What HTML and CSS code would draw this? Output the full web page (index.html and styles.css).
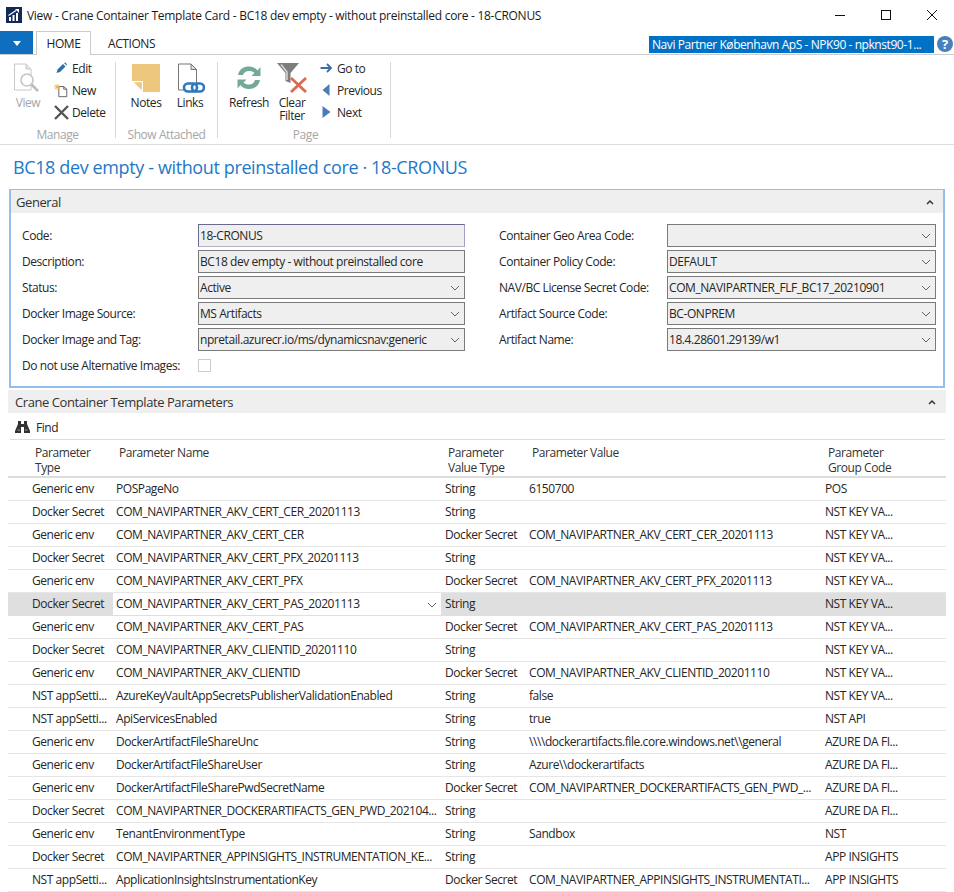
FILE: index.html
```html
<!DOCTYPE html>
<html lang="en">
<head>
    <meta charset="UTF-8">
    <title>View - Crane Container Template Card</title>
    <link rel="stylesheet" href="styles.css">
</head>
<body>
    <header class="titlebar">
        <svg class="app-icon" width="16" height="16" viewBox="0 0 16 16">
            <rect width="16" height="16" fill="#12295a"/>
            <path d="M3 14V10H5V14ZM6.5 14V8H8.5V14ZM10 14V6H12V14Z" fill="#fff"/>
            <path d="M2.5 8.5L10 3.5" stroke="#fff" stroke-width="1.2"/>
            <path d="M9 2H13V6Z" fill="#fff"/>
        </svg>
        <span class="window-title">View - Crane Container Template Card - BC18 dev empty - without preinstalled core - 18-CRONUS</span>
        <div class="window-buttons">
            <svg width="12" height="12" viewBox="0 0 12 12"><path d="M1 6.5H11" stroke="#111" fill="none"/></svg>
            <svg width="12" height="12" viewBox="0 0 12 12"><rect x="1.5" y="1.5" width="9" height="9" stroke="#111" fill="none"/></svg>
            <svg width="12" height="12" viewBox="0 0 12 12"><path d="M1 1L11 11M11 1L1 11" stroke="#111" fill="none"/></svg>
        </div>
    </header>

    <nav class="tabbar">
        <button class="menu-button"><span class="menu-arrow"></span></button>
        <span class="tab active">HOME</span>
        <span class="tab">ACTIONS</span>
        <span class="company">Navi Partner København ApS - NPK90 - npknst90-1...</span>
        <span class="help">?</span>
    </nav>

    <section class="ribbon">
        <div class="group group-manage">
            <div class="group-items">
                <div class="big-btn disabled">
                    <svg width="30" height="30" viewBox="0 0 30 30">
                        <path d="M1.5 1H13L18 6V27H1.5Z" fill="#fff" stroke="#c8c8c8"/>
                        <path d="M13 1V6H18" fill="#e4e4e4" stroke="#c8c8c8"/>
                        <circle cx="14" cy="17" r="6" fill="#fff" stroke="#c4c4c4" stroke-width="1.6"/>
                        <path d="M18.5 21.5L25 28" stroke="#bdbdbd" stroke-width="2.6"/>
                    </svg>
                    <span>View</span>
                </div>
                <div class="small-list">
                    <div class="small-btn">
                        <svg width="12" height="12" viewBox="0 0 12 12"><path d="M1 11L2 7.5L7.5 2L10 4.5L4.5 10Z" fill="#2f6fad"/><path d="M8.5 1L9.8 .5L11.5 2.2L11 3.5Z" fill="#2f6fad"/></svg>
                        <span>Edit</span>
                    </div>
                    <div class="small-btn">
                        <svg width="15" height="15" viewBox="0 0 17 15"><path d="M5.5 3H11L14.5 6V14.5H5.5Z" fill="#fff" stroke="#555"/><path d="M11 3V6H14.5" fill="none" stroke="#555"/><path d="M3.5 0V7M0 3.5H7M1 1L6 6M6 1L1 6" stroke="#eeb340"/></svg>
                        <span>New</span>
                    </div>
                    <div class="small-btn">
                        <svg width="15" height="15" viewBox="0 0 15 15"><path d="M1 1L14 14M14 1L1 14" stroke="#555" stroke-width="2.4"/></svg>
                        <span>Delete</span>
                    </div>
                </div>
            </div>
            <div class="group-name">Manage</div>
        </div>
        <div class="group group-attached">
            <div class="group-items">
                <div class="big-btn btn-notes">
                    <svg width="30" height="30" viewBox="0 0 30 30">
                        <path d="M1 1H29V29H12L1 18Z" fill="#eec77e"/>
                        <path d="M1 18H12V29Z" fill="#fff"/>
                        <path d="M3 19.2H10.8V27Z" fill="#eec77e"/>
                    </svg>
                    <span>Notes</span>
                </div>
                <div class="big-btn btn-links">
                    <svg width="30" height="30" viewBox="0 0 30 30">
                        <path d="M3.5 1H16L21.5 6.5V27H3.5Z" fill="#fff" stroke="#777"/>
                        <path d="M16 1V6.500H21.500Z" fill="#ddd" stroke="#777"/>
                        <rect x="9" y="20.500" width="13" height="8" rx="4" fill="#fff" stroke="#2e78c0" stroke-width="2.600"/>
                        <rect x="17" y="20.500" width="12" height="8" rx="4" fill="none" stroke="#2e78c0" stroke-width="2.600"/>
                    </svg>
                    <span>Links</span>
                </div>
            </div>
            <div class="group-name">Show Attached</div>
        </div>
        <div class="group group-page">
            <div class="group-items">
                <div class="big-btn btn-refresh">
                    <svg width="28" height="30" viewBox="0 0 28 30">
                        <path d="M3 12C4 6 9 3.500 14 3.500C18 3.500 20.500 5 22.500 7.500L25.500 4V13H16.500L19.500 10C18 8.500 16.500 8 14 8C11 8 9 9.500 8 12Z" fill="#76a899"/>
                        <path d="M25 17C24 23 19 26 14 26C10 26 7.500 24.500 5.500 22L2.500 25.500V16.500H11.500L8.500 19.500C10 21 11.500 21.500 14 21.500C17 21.500 19 20 20 17Z" fill="#76a899"/>
                    </svg>
                    <span>Refresh</span>
                </div>
                <div class="big-btn btn-filter">
                    <svg width="32" height="30" viewBox="0 0 32 30">
                        <path d="M1 0H23L14.500 10V20L9.500 18V10Z" fill="#7d7d7d"/>
                        <path d="M5 1.500L11 9V17" fill="none" stroke="#d8d8d8" stroke-width="1.500"/>
                        <path d="M15 15L30 29M30 15L15 29" stroke="#db6a4f" stroke-width="2.800"/>
                    </svg>
                    <span>Clear<br>Filter</span>
                </div>
                <div class="small-list small-list-page">
                    <div class="small-btn">
                        <svg width="12" height="12" viewBox="0 0 12 12"><path d="M0 6H10M6.500 2L10.500 6L6.500 10" fill="none" stroke="#3b6ea8" stroke-width="1.800"/></svg>
                        <span>Go to</span>
                    </div>
                    <div class="small-btn">
                        <svg width="12" height="12" viewBox="0 0 12 12"><path d="M9 0V12L2 6Z" fill="#4a7db8"/></svg>
                        <span>Previous</span>
                    </div>
                    <div class="small-btn">
                        <svg width="12" height="12" viewBox="0 0 12 12"><path d="M2 0V12L10 6Z" fill="#4a7db8"/></svg>
                        <span>Next</span>
                    </div>
                </div>
            </div>
            <div class="group-name">Page</div>
        </div>
    </section>

    <h1 class="page-title">BC18 dev empty - without preinstalled core · 18-CRONUS</h1>

    <section class="panel">
        <div class="panel-head">
            <span>General</span>
            <svg class="collapse" width="8" height="6" viewBox="0 0 8 6"><path d="M1 5L4 2L7 5" fill="none" stroke="#333" stroke-width="1.500"/></svg>
        </div>
        <div class="form">
            <div class="form-col">
                <div class="field"><label>Code:</label><div class="input input-focus">18-CRONUS</div></div>
                <div class="field"><label>Description:</label><div class="input">BC18 dev empty - without preinstalled core</div></div>
                <div class="field"><label>Status:</label><div class="input select">Active</div></div>
                <div class="field"><label>Docker Image Source:</label><div class="input select">MS Artifacts</div></div>
                <div class="field"><label>Docker Image and Tag:</label><div class="input select">npretail.azurecr.io/ms/dynamicsnav:generic</div></div>
                <div class="field"><label>Do not use Alternative Images:</label><div class="checkbox"></div></div>
            </div>
            <div class="form-col form-col-right">
                <div class="field"><label>Container Geo Area Code:</label><div class="input select"></div></div>
                <div class="field"><label>Container Policy Code:</label><div class="input select">DEFAULT</div></div>
                <div class="field"><label>NAV/BC License Secret Code:</label><div class="input select">COM_NAVIPARTNER_FLF_BC17_20210901</div></div>
                <div class="field"><label>Artifact Source Code:</label><div class="input select">BC-ONPREM</div></div>
                <div class="field"><label>Artifact Name:</label><div class="input select">18.4.28601.29139/w1</div></div>
            </div>
        </div>
    </section>

    <section class="params">
        <div class="panel-head params-head">
            <span>Crane Container Template Parameters</span>
            <svg class="collapse" width="8" height="6" viewBox="0 0 8 6"><path d="M1 5L4 2L7 5" fill="none" stroke="#333" stroke-width="1.500"/></svg>
        </div>
        <div class="find-bar">
            <svg width="15" height="12" viewBox="0 0 15 12">
                <path d="M3 0H6V3H9V0H12V3L15 10V12H9V6H6V12H0V10L3 3Z" fill="#333"/>
                <path d="M2.500 9H5M10 9H12.500" stroke="#999"/>
            </svg>
            <span>Find</span>
        </div>
        <table class="grid">
            <colgroup>
                <col class="col-type"><col class="col-name"><col class="col-vtype"><col class="col-value"><col class="col-group">
            </colgroup>
            <thead>
                <tr>
                    <th>Parameter<br>Type</th>
                    <th>Parameter Name</th>
                    <th>Parameter<br>Value Type</th>
                    <th>Parameter Value</th>
                    <th>Parameter<br>Group Code</th>
                </tr>
            </thead>
            <tbody>
                <tr><td>Generic env</td><td>POSPageNo</td><td>String</td><td>6150700</td><td>POS</td></tr>
                <tr><td>Docker Secret</td><td>COM_NAVIPARTNER_AKV_CERT_CER_20201113</td><td>String</td><td></td><td>NST KEY VA...</td></tr>
                <tr><td>Generic env</td><td>COM_NAVIPARTNER_AKV_CERT_CER</td><td>Docker Secret</td><td>COM_NAVIPARTNER_AKV_CERT_CER_20201113</td><td>NST KEY VA...</td></tr>
                <tr><td>Docker Secret</td><td>COM_NAVIPARTNER_AKV_CERT_PFX_20201113</td><td>String</td><td></td><td>NST KEY VA...</td></tr>
                <tr><td>Generic env</td><td>COM_NAVIPARTNER_AKV_CERT_PFX</td><td>Docker Secret</td><td>COM_NAVIPARTNER_AKV_CERT_PFX_20201113</td><td>NST KEY VA...</td></tr>
                <tr class="selected"><td>Docker Secret</td><td class="editing">COM_NAVIPARTNER_AKV_CERT_PAS_20201113<svg class="cell-arrow" width="10" height="6" viewBox="0 0 10 6"><path d="M1 1L5 5L9 1" fill="none" stroke="#666"/></svg></td><td>String</td><td></td><td>NST KEY VA...</td></tr>
                <tr><td>Generic env</td><td>COM_NAVIPARTNER_AKV_CERT_PAS</td><td>Docker Secret</td><td>COM_NAVIPARTNER_AKV_CERT_PAS_20201113</td><td>NST KEY VA...</td></tr>
                <tr><td>Docker Secret</td><td>COM_NAVIPARTNER_AKV_CLIENTID_20201110</td><td>String</td><td></td><td>NST KEY VA...</td></tr>
                <tr><td>Generic env</td><td>COM_NAVIPARTNER_AKV_CLIENTID</td><td>Docker Secret</td><td>COM_NAVIPARTNER_AKV_CLIENTID_20201110</td><td>NST KEY VA...</td></tr>
                <tr><td>NST appSetti...</td><td>AzureKeyVaultAppSecretsPublisherValidationEnabled</td><td>String</td><td>false</td><td>NST KEY VA...</td></tr>
                <tr><td>NST appSetti...</td><td>ApiServicesEnabled</td><td>String</td><td>true</td><td>NST API</td></tr>
                <tr><td>Generic env</td><td>DockerArtifactFileShareUnc</td><td>String</td><td>\\\\dockerartifacts.file.core.windows.net\\general</td><td>AZURE DA FI...</td></tr>
                <tr><td>Generic env</td><td>DockerArtifactFileShareUser</td><td>String</td><td>Azure\\dockerartifacts</td><td>AZURE DA FI...</td></tr>
                <tr><td>Generic env</td><td>DockerArtifactFileSharePwdSecretName</td><td>Docker Secret</td><td>COM_NAVIPARTNER_DOCKERARTIFACTS_GEN_PWD_...</td><td>AZURE DA FI...</td></tr>
                <tr><td>Docker Secret</td><td>COM_NAVIPARTNER_DOCKERARTIFACTS_GEN_PWD_202104...</td><td>String</td><td></td><td>AZURE DA FI...</td></tr>
                <tr><td>Generic env</td><td>TenantEnvironmentType</td><td>String</td><td>Sandbox</td><td>NST</td></tr>
                <tr><td>Docker Secret</td><td>COM_NAVIPARTNER_APPINSIGHTS_INSTRUMENTATION_KE...</td><td>String</td><td></td><td>APP INSIGHTS</td></tr>
                <tr><td>NST appSetti...</td><td>ApplicationInsightsInstrumentationKey</td><td>Docker Secret</td><td>COM_NAVIPARTNER_APPINSIGHTS_INSTRUMENTATI...</td><td>APP INSIGHTS</td></tr>
            </tbody>
        </table>
    </section>
</body>
</html>
```

FILE: styles.css
```css
/* General */
html, body {
    height: 892px;
    overflow: hidden;
}

body {
    margin: 0;
    background: #fff;
    color: #262626;
    font-family: "Open Sans", "Noto Sans", sans-serif;
    font-size: 12px;
    letter-spacing: -0.43px;
}

svg {
    display: block;
    flex: none;
}

/* Title bar */
.titlebar {
    display: flex;
    align-items: center;
    height: 30px;
    padding-left: 6px;
}

.window-title {
    margin-left: 5px;
    color: #1a1a1a;
    letter-spacing: -0.28px;
}

.window-buttons {
    display: flex;
    gap: 34px;
    margin-left: auto;
    margin-right: 16px;
}

/* Tabs */
.tabbar {
    display: flex;
    align-items: flex-end;
    height: 23px;
    padding-top: 1px;
    border-bottom: 1px solid #ccc;
}

.menu-button {
    width: 33px;
    height: 23px;
    margin: 0 3px 0 0;
    padding: 0;
    border: none;
    background: #106ebe;
    align-self: flex-start;
}

.menu-arrow {
    display: block;
    width: 0;
    margin: 1px auto 0;
    border-left: 4px solid transparent;
    border-right: 4px solid transparent;
    border-top: 5px solid #fff;
}

.tab {
    height: 23px;
    line-height: 23px;
    padding: 0 16px;
    color: #222;
    margin-bottom: -1px;
}

.tab.active {
    width: 55px;
    box-sizing: border-box;
    height: 24px;
    padding: 0 9px;
    text-align: center;
    border: 1px solid #ccc;
    border-bottom: none;
    background: #fff;
    margin-right: 1px;
}

.company {
    margin-left: auto;
    width: 285px;
    box-sizing: border-box;
    height: 17px;
    line-height: 17px;
    margin-bottom: 1px;
    padding-left: 3px;
    background: #0072c6;
    color: #fff;
    white-space: nowrap;
    overflow: hidden;
}

.help {
    width: 16px;
    height: 16px;
    line-height: 16px;
    margin: 0 1px 2px 3px;
    border-radius: 50%;
    background: #4a7fbd;
    color: #fff;
    font-weight: 700;
    font-size: 13px;
    text-align: center;
}

/* Ribbon */
.ribbon {
    display: flex;
    height: 90px;
    border-bottom: 1px solid #ddd;
    box-sizing: border-box;
}

.group {
    display: flex;
    flex-direction: column;
    box-sizing: border-box;
    height: 76px;
    margin-top: 7px;
    border-right: 1px solid #d8d8d8;
}

.group-manage { width: 116px; }
.group-attached { width: 102px; }
.group-page { width: 173px; }

.group-page .group-name {
    padding-left: 3px;
}

.group-items {
    display: flex;
    flex: 1;
}

.group-name {
    text-align: center;
    color: #a6a6a6;
    line-height: 16px;
    margin-bottom: -5px;
}

.big-btn {
    display: flex;
    flex-direction: column;
    align-items: center;
    width: 44px;
    padding-top: 1px;
    line-height: 13px;
    text-align: center;
}

.big-btn span {
    margin-top: 3px;
}

.big-btn.disabled {
    width: 56px;
    color: #a6a6a6;
    margin-right: -2px;
}

.btn-notes { margin-left: 8px; }
.btn-refresh { margin-left: 9px; }
.btn-filter { width: 42px; }

.small-list {
    display: flex;
    flex-direction: column;
    gap: 4px;
    margin-top: -3px;
}

.small-list-page {
    margin-left: 6px;
}

.small-btn {
    display: flex;
    align-items: center;
    gap: 3px;
    height: 18px;
}

.small-btn svg {
    width: 15px;
}

/* Page title */
.page-title {
    margin: 11px 0 0 13px;
    height: 33px;
    color: #1e78c8;
    font-size: 18px;
    font-weight: 400;
    line-height: 22px;
    letter-spacing: -0.38px;
}

/* Panels */
.panel {
    margin: 0 9px 0 9px;
    height: 199px;
    box-sizing: border-box;
    border: 2px solid #92bfee;
    border-top-width: 1px;
}

.panel-head {
    display: flex;
    justify-content: space-between;
    align-items: center;
    height: 23px;
    padding: 0 9px 0 5px;
    background: #efefef;
    font-size: 13px;
    color: #333;
}

.form {
    display: flex;
    padding: 11px 7px 0 11px;
}

.form-col {
    width: 443px;
    display: flex;
    flex-direction: column;
    gap: 3px;
}

.form-col-right {
    width: 437px;
    margin-left: 34px;
}

.field {
    display: flex;
    align-items: center;
    height: 23px;
}

.field label {
    width: 176px;
    flex: none;
}

.form-col-right .field label {
    width: 168px;
}

.input {
    flex: 1;
    box-sizing: border-box;
    height: 23px;
    line-height: 21px;
    padding-left: 1px;
    border: 1px solid #7a7a7a;
    background: #efefef;
    white-space: nowrap;
    overflow: hidden;
}

.input-focus {
    border-color: #6a6a8e #a0a0c0 #b0b0c8 #6a6a8e;
}

.select {
    background: #efefef url("data:image/svg+xml,%3Csvg xmlns='http://www.w3.org/2000/svg' width='10' height='6'%3E%3Cpath d='M1 1L5 5L9 1' fill='none' stroke='%23666'/%3E%3C/svg%3E") no-repeat right 4px center;
}

.checkbox {
    width: 13px;
    height: 13px;
    box-sizing: border-box;
    border: 1px solid #ccc;
}

/* Parameters grid */
.params {
    margin: 2px 8px 0 8px;
}

.params-head {
    padding-left: 7px;
    padding-right: 10px;
}

.find-bar {
    display: flex;
    align-items: center;
    gap: 6px;
    height: 24px;
    margin: 0 1px 0 2px;
    padding: 2px 0 0 5px;
    border-bottom: 1px solid #ddd;
}

.grid {
    width: 938px;
    table-layout: fixed;
    border-collapse: collapse;
}

.col-type { width: 105px; }
.col-name { width: 328px; }
.col-vtype { width: 84px; }
.col-value { width: 296px; }
.col-group { width: 125px; }

.grid th {
    height: 36px;
    padding: 5px 0 1px 6px;
    box-sizing: border-box;
    vertical-align: top;
    text-align: left;
    font-weight: 400;
    line-height: 15px;
    color: #333;
    border-bottom: 2px solid #ddd;
}

.grid th:first-child {
    padding-left: 27px;
}

.grid th:nth-child(n+3) {
    padding-left: 7px;
}

.grid td {
    height: 21px;
    padding: 0 0 1px 3px;
    border-bottom: 1px solid #e6e6e6;
    white-space: nowrap;
    overflow: hidden;
}

.grid td:first-child {
    padding-left: 24px;
}

.grid td:nth-child(n+3) {
    padding-left: 4px;
}

.selected td {
    background: #dfdfdf;
    border-bottom-color: #dfdfdf;
}

.selected .editing {
    position: relative;
    background: #fff;
}

.cell-arrow {
    position: absolute;
    right: 4px;
    top: 9px;
}
```
